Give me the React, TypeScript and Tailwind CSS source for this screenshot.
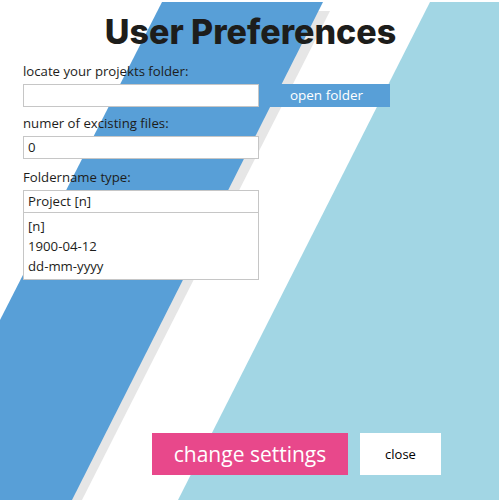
import React from "react";

export default function App() {
  const opts = ["[n]", "1900-04-12", "dd-mm-yyyy"];
  return (
    <div className="relative w-[501px] h-[500px] overflow-hidden bg-white font-['Open_Sans',sans-serif] text-[13.2px] text-[#1d1d1b]">
      <svg className="absolute inset-0" width="501" height="500" viewBox="0 0 501 500">
        <polygon points="169,11 330,11 82,500 0,500 0,330" fill="#e6e6e6" />
        <polygon points="162,2 323,2 72,500 0,500 0,320" fill="#589fd7" />
        <polygon points="430,2 499,2 499,500 178,500" fill="#a2d6e4" />
      </svg>
      <div className="relative flex flex-col pt-[15px]">
        <h1 className="h-[34px] text-center font-['Inter',sans-serif] text-[34px] leading-[34px] font-extrabold tracking-[0px] text-[#1d1d1b]">
          User Preferences
        </h1>
        <div className="px-[23px] flex flex-col">
          <div className="mt-[13px] h-[18px] leading-[18px]">locate your projekts folder:</div>
          <div className="mt-[4px] flex gap-[4px]">
            <div className="w-[236px] h-[23px] bg-white border border-[#c6c6c6]" />
            <div className="w-[127px] h-[23px] bg-[#589fd7] text-white text-[13.5px] leading-[23px] text-center">
              open folder
            </div>
          </div>
          <div className="mt-[7px] h-[18px] leading-[18px]">numer of excisting files:</div>
          <div className="mt-[4px] w-[236px] h-[23px] bg-white border border-[#c6c6c6] px-[4px] leading-[21px]">0</div>
          <div className="mt-[9px] h-[18px] leading-[18px]">Foldername type:</div>
          <div className="mt-[4px] w-[236px] h-[23px] bg-white border border-[#c6c6c6] px-[4px] leading-[21px]">Project [n]</div>
          <div className="w-[236px] h-[67px] bg-white border border-t-0 border-[#c6c6c6] px-[4px] pt-[3px] flex flex-col">
            {opts.map((o) => (
              <div key={o} className="h-[20px] leading-[20px]">{o}</div>
            ))}
          </div>
        </div>
        <div className="mt-[153px] flex pl-[152px] gap-[12px]">
          <div className="w-[196px] h-[42px] bg-[#e8488b] text-white text-[21px] leading-[42px] text-center">
            change settings
          </div>
          <div className="w-[81px] h-[42px] bg-white text-black text-[13px] leading-[42px] text-center">close</div>
        </div>
      </div>
    </div>
  );
}
